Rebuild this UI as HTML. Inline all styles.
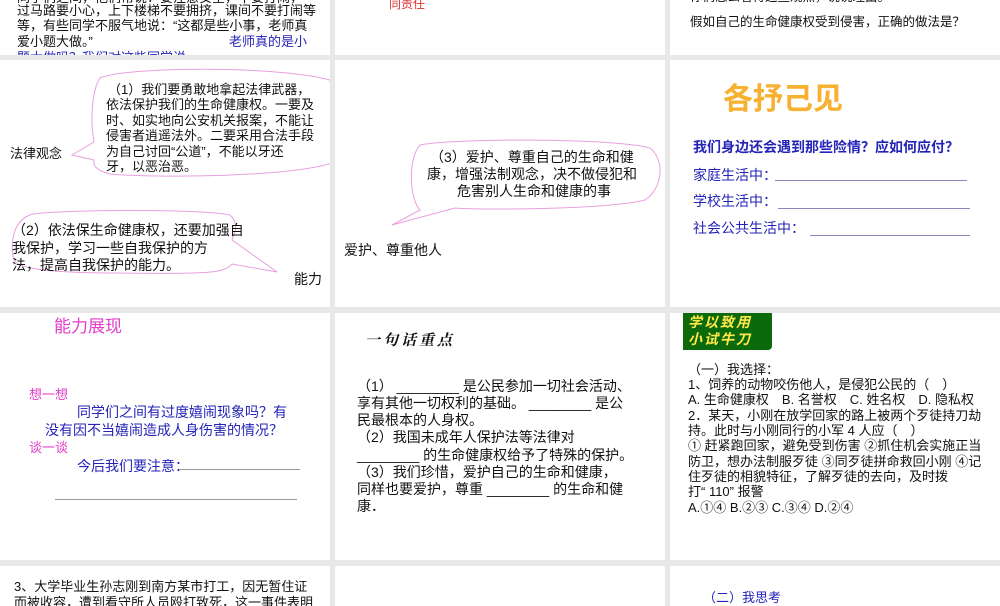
<!DOCTYPE html>
<html><head><meta charset="utf-8"><style>
body{margin:0;width:1000px;height:600px;overflow:hidden;background:#e8e8e8;position:relative;font-family:"Liberation Sans","Noto Sans CJK SC",sans-serif;color:#111}
.s{position:absolute;background:#fff;overflow:hidden}
.t{position:absolute;white-space:nowrap;font-size:13px;line-height:16px}
.b{color:#2424b8}
.p{color:#e23cc8}
svg{position:absolute;left:0;top:0}
</style></head><body>
<div class="s" style="left:0;top:0;width:330px;height:55px">
<div class="t" style="left:17px;top:-10px">同学们之间，他们常说：要注意安全，不要打闹，</div>
<div class="t" style="left:17px;top:3px">过马路要小心，上下楼梯不要拥挤，课间不要打闹等</div>
<div class="t" style="left:17px;top:18px">等，有些同学不服气地说：“这都是些小事，老师真</div>
<div class="t" style="left:17px;top:34px">爱小题大做。”</div>
<div class="t b" style="left:229px;top:34px">老师真的是小</div>
<div class="t b" style="left:17px;top:50px">题大做吗？我们对这些同学说</div>
</div>
<div class="s" style="left:335px;top:0;width:330px;height:55px">
<div class="t" style="left:54px;top:-4px;color:#e03030;font-size:12px">同责任</div>
</div>
<div class="s" style="left:670px;top:0;width:330px;height:55px">
<div class="t" style="left:20px;top:-11px;font-size:12.5px">你们怎么看待这些观点，说说理由。</div>
<div class="t" style="left:20px;top:14px;font-size:12.5px">假如自己的生命健康权受到侵害，正确的做法是？</div>
</div>

<div class="s" style="left:0;top:60px;width:330px;height:247px">
<svg width="330" height="247"><path d="M100,18 C130,6 280,6 330,20 L340,100 C300,118 150,118 110,114 C95,110 93,105 94,100 L72,95 L94,82 C90,60 92,30 100,18Z" fill="none" stroke="#e8a0e0"/>
<path d="M30,155 C40,150 200,148 230,155 C238,162 236,172 232,180 L277,212 L232,204 C225,214 200,214 120,213 C60,213 18,210 14,200 C10,185 12,162 30,155Z" fill="none" stroke="#e8a0e0"/></svg>
<div class="t" style="left:108px;top:22px">（1）我们要勇敢地拿起法律武器，</div>
<div class="t" style="left:106px;top:37px">依法保护我们的生命健康权。一要及</div>
<div class="t" style="left:106px;top:53px">时、如实地向公安机关报案，不能让</div>
<div class="t" style="left:106px;top:68px">侵害者逍遥法外。二要采用合法手段</div>
<div class="t" style="left:106px;top:84px">为自己讨回“公道”，不能以牙还</div>
<div class="t" style="left:106px;top:99px">牙，以恶治恶。</div>
<div class="t" style="left:10px;top:86px">法律观念</div>
<div class="t" style="left:12px;top:161px;font-size:14px;line-height:18px">（2）依法保生命健康权，还要加强自</div>
<div class="t" style="left:12px;top:179px;font-size:14px;line-height:18px">我保护，学习一些自我保护的方</div>
<div class="t" style="left:12px;top:196px;font-size:14px;line-height:18px">法，提高自我保护的能力。</div>
<div class="t" style="left:294px;top:210px;font-size:14px;line-height:18px">能力</div>
</div>
<div class="s" style="left:335px;top:60px;width:330px;height:247px">
<svg width="330" height="247"><path d="M85,85 C120,78 280,78 315,88 C330,100 328,128 310,140 C270,150 140,150 120,148 L57,165 L85,150 C75,140 72,100 85,85Z" fill="none" stroke="#e8a0e0"/></svg>
<div class="t" style="left:95px;top:88px;font-size:14px;line-height:18px">（3）爱护、尊重自己的生命和健</div>
<div class="t" style="left:92px;top:105px;font-size:14px;line-height:18px">康，增强法制观念，决不做侵犯和</div>
<div class="t" style="left:122px;top:122px;font-size:14px;line-height:18px">危害别人生命和健康的事</div>
<div class="t" style="left:9px;top:181px;font-size:14px;line-height:18px">爱护、尊重他人</div>
</div>
<div class="s" style="left:670px;top:60px;width:330px;height:247px">
<div class="t" style="left:53px;top:22px;font-size:30px;line-height:36px;font-weight:bold;color:#f7b030">各抒己见</div>
<div class="t b" style="left:23px;top:78px;font-size:14px;line-height:18px;font-weight:bold">我们身边还会遇到那些险情？应如何应付？</div>
<div class="t b" style="left:23px;top:106px;font-size:14px;line-height:18px">家庭生活中：</div>
<div style="position:absolute;left:105px;top:120px;width:192px;border-top:1px solid #8888bb"></div>
<div class="t b" style="left:23px;top:132px;font-size:14px;line-height:18px">学校生活中：</div>
<div style="position:absolute;left:108px;top:148px;width:192px;border-top:1px solid #8888bb"></div>
<div class="t b" style="left:23px;top:159px;font-size:14px;line-height:18px">社会公共生活中：</div>
<div style="position:absolute;left:140px;top:175px;width:160px;border-top:1px solid #8888bb"></div>
</div>

<div class="s" style="left:0;top:313px;width:330px;height:247px">
<div class="t p" style="left:54px;top:4px;font-size:17px;line-height:20px">能力展现</div>
<div class="t p" style="left:29px;top:74px">想一想</div>
<div class="t b" style="left:77px;top:90px;font-size:14px;line-height:18px">同学们之间有过度嬉闹现象吗？有</div>
<div class="t b" style="left:45px;top:108px;font-size:14px;line-height:18px">没有因不当嬉闹造成人身伤害的情况？</div>
<div class="t p" style="left:29px;top:127px">谈一谈</div>
<div class="t b" style="left:77px;top:144px;font-size:14px;line-height:18px">今后我们要注意：</div>
<div style="position:absolute;left:180px;top:156px;width:120px;border-top:1px solid #999"></div>
<div style="position:absolute;left:55px;top:186px;width:242px;border-top:1px solid #999"></div>
</div>
<div class="s" style="left:335px;top:313px;width:330px;height:247px">
<div class="t" style="left:30px;top:18px;font-size:15px;line-height:20px;font-weight:bold;letter-spacing:3px;font-family:'Liberation Serif','Noto Serif CJK SC',serif;font-style:italic">一句话重点</div>
<div class="t" style="left:22px;top:65px;font-size:14px;line-height:17px">（1） ________ 是公民参加一切社会活动、</div>
<div class="t" style="left:22px;top:82px;font-size:14px;line-height:17px">享有其他一切权利的基础。 ________ 是公</div>
<div class="t" style="left:22px;top:99px;font-size:14px;line-height:17px">民最根本的人身权。</div>
<div class="t" style="left:22px;top:116px;font-size:14px;line-height:17px">（2）我国未成年人保护法等法律对</div>
<div class="t" style="left:22px;top:134px;font-size:14px;line-height:17px">________ 的生命健康权给予了特殊的保护。</div>
<div class="t" style="left:22px;top:151px;font-size:14px;line-height:17px">（3）我们珍惜，爱护自己的生命和健康，</div>
<div class="t" style="left:22px;top:168px;font-size:14px;line-height:17px">同样也要爱护，尊重 ________ 的生命和健</div>
<div class="t" style="left:22px;top:185px;font-size:14px;line-height:17px">康．</div>
</div>
<div class="s" style="left:670px;top:313px;width:330px;height:247px">
<div style="position:absolute;left:13px;top:0;width:89px;height:37px;background:#0b6a0b;border-radius:0 0 4px 0"></div>
<div class="t" style="left:18px;top:1px;color:#ffe84a;font-weight:bold;font-style:italic;font-size:14px;letter-spacing:2px">学以致用</div>
<div class="t" style="left:18px;top:18px;color:#ffe84a;font-weight:bold;font-style:italic;font-size:14px;letter-spacing:2px">小试牛刀</div>
<div class="t" style="left:18px;top:49px">（一）我选择：</div>
<div class="t" style="left:18px;top:64px">1、饲养的动物咬伤他人，是侵犯公民的（　）</div>
<div class="t" style="left:18px;top:79px">A. 生命健康权　B. 名誉权　C. 姓名权　D. 隐私权</div>
<div class="t" style="left:18px;top:95px">2．某天，小刚在放学回家的路上被两个歹徒持刀劫</div>
<div class="t" style="left:18px;top:110px">持。此时与小刚同行的小军 4 人应（　）</div>
<div class="t" style="left:18px;top:125px">① 赶紧跑回家，避免受到伤害 ②抓住机会实施正当</div>
<div class="t" style="left:18px;top:141px">防卫，想办法制服歹徒 ③同歹徒拼命救回小刚 ④记</div>
<div class="t" style="left:18px;top:156px">住歹徒的相貌特征，了解歹徒的去向，及时拨</div>
<div class="t" style="left:18px;top:171px">打“ 110” 报警</div>
<div class="t" style="left:18px;top:187px">A.①④  B.②③  C.③④  D.②④</div>
</div>

<div class="s" style="left:0;top:566px;width:330px;height:40px">
<div class="t" style="left:14px;top:13px">3、大学毕业生孙志刚到南方某市打工，因无暂住证</div>
<div class="t" style="left:14px;top:29px">而被收容，遭到看守所人员殴打致死，这一事件表明</div>
</div>
<div class="s" style="left:335px;top:566px;width:330px;height:40px"></div>
<div class="s" style="left:670px;top:566px;width:330px;height:40px">
<div class="t b" style="left:33px;top:24px">（二）我思考</div>
</div>
</body></html>
